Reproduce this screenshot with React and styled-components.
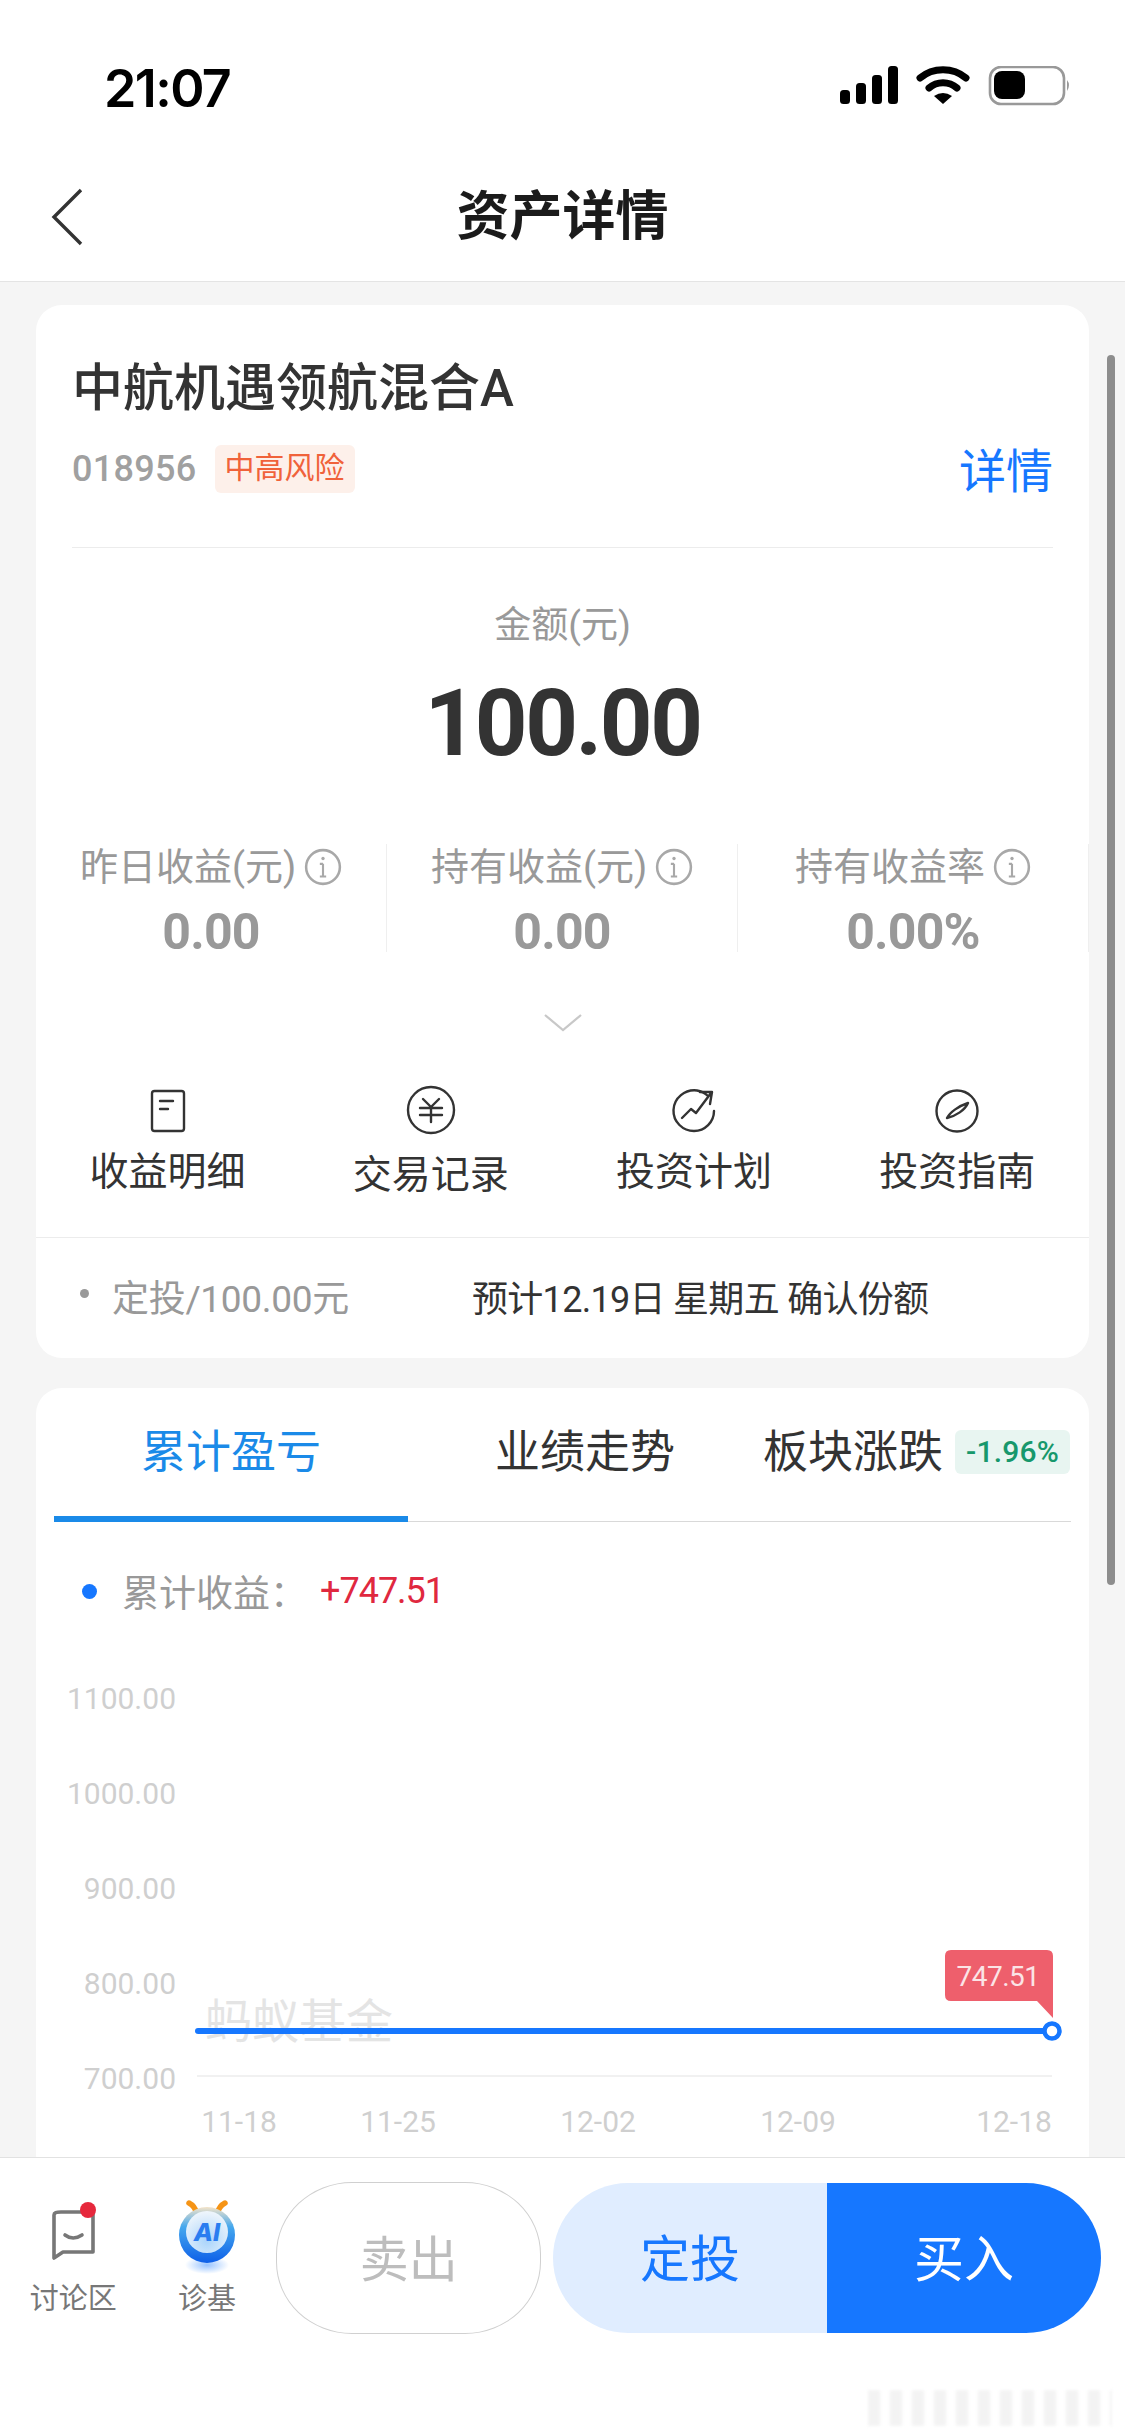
import React from 'react';
import styled, { createGlobalStyle } from 'styled-components';

const Global = createGlobalStyle`
  html, body { margin: 0; padding: 0; background: #fff; }
  * { box-sizing: border-box; }
  body { font-family: Roboto, "Noto Sans CJK SC", "Noto Sans", sans-serif; }
`;

const Page = styled.div`
  position: relative; width: 1125px; height: 2436px; overflow: hidden;
  display: flex; flex-direction: column; background: #fff;
`;
const StatusBar = styled.div`
  height: 178px; flex: none; padding: 59px 54px 0 104px;
  display: flex; justify-content: space-between; align-items: flex-start;
`;
const Clock = styled.div`
  font-family: Inter, sans-serif; font-size: 52px; line-height: 60px; font-weight: 600; color: #000; letter-spacing: -1.6px;
`;
const StatusIcons = styled.svg`width: 232px; height: 50px; margin-top: 7px;`;
const NavBar = styled.div`
  height: 104px; flex: none; position: relative; display: flex; align-items: center; justify-content: center;
  border-bottom: 1.5px solid #e4e4e4; padding-bottom: 26px;
`;
const BackIcon = styled.svg`position: absolute; left: 49px; top: 9px; width: 38px; height: 60px;`;
const NavTitle = styled.div`font-size: 53px; font-weight: 700; color: #1b1b1b; line-height: 60px;`;
const Scroller = styled.div`
  flex: 1; min-height: 0; overflow: hidden; background: #f5f5f5;
  padding: 23px 36px 0; display: flex; flex-direction: column; gap: 30px;
`;
const Card = styled.section`
  background: #fff; border-radius: 26px; flex: none;
`;
const Head = styled.div`
  margin: 0 36px; height: 243px; border-bottom: 1.5px solid #ececec; padding-top: 52px;
`;
const FundName = styled.div`font-size: 51px; font-weight: 500; line-height: 64px; color: #333;`;
const MetaRow = styled.div`display: flex; align-items: center; margin-top: 24px; height: 48px;`;
const Code = styled.span`font-size: 36px; font-weight: 500; color: #a0a0a0; letter-spacing: 0.3px;`;
const RiskTag = styled.span`
  margin-left: 18px; height: 48px; padding: 0 10px; background: #fdf0ea; border-radius: 6px;
  font-size: 30px; line-height: 46px; color: #f0623a;
`;
const DetailLink = styled.span`margin-left: auto; font-size: 47px; color: #1677ff; line-height: 52px; padding-top: 6px;`;
const Amount = styled.div`display: flex; flex-direction: column; align-items: center; padding-top: 55px;`;
const AmountLabel = styled.div`font-size: 37px; line-height: 46px; color: #999;`;
const AmountValue = styled.div`
  font-size: 92px; line-height: 110px; margin-top: 20px; font-weight: 700; color: #333; letter-spacing: -2.4px;
`;
const Stats = styled.div`display: grid; grid-template-columns: repeat(3, 351px); margin-top: 65px;`;
const Stat = styled.div`
  height: 108px; border-right: 1.5px solid #efefef; display: flex; flex-direction: column; align-items: center;
`;
const StatLabel = styled.div`
  display: flex; align-items: center; gap: 8px; font-size: 38px; line-height: 46px; color: #999;
`;
const StatValue = styled.div`
  font-size: 50px; line-height: 60px; margin-top: 12px; font-weight: 700; color: #999; letter-spacing: -0.8px;
`;
const InfoIcon = styled.svg`width: 38px; height: 38px; flex: none;`;
const Chevron = styled.svg`display: block; width: 40px; height: 20px; margin: 61px auto 0;`;
const Actions = styled.div`display: grid; grid-template-columns: repeat(4, 1fr); margin-top: 52px; height: 127px;`;
const Action = styled.div`
  display: flex; flex-direction: column; align-items: center; font-size: 39px; color: #333;
`;
const ActionIcon = styled.svg`width: 52px; height: 52px;`;
const ActionLabel = styled.div`line-height: 46px; margin-top: ${p => p.$low ? 15 : 12}px;`;
const PlanRow = styled.div`
  margin-top: 25px; height: 121px; border-top: 1.5px solid #ececec; display: flex; align-items: center; padding: 0 0 4px 44px;
  font-size: 36px;
`;
const PlanDot = styled.i`width: 9px; height: 9px; border-radius: 50%; background: #999; margin-right: 23px; margin-bottom: 6px;`;
const PlanType = styled.span`color: #999; width: 360px; font-size: 37px; letter-spacing: -0.3px;`;
const PlanNote = styled.span`color: #333; letter-spacing: -0.7px;`;
const Tabs = styled.div`
  margin: 0 18px; height: 134px; display: flex; border-bottom: 1.5px solid #d9d9d9; position: relative;
`;
const Tab = styled.div`
  width: ${p => p.$w}px; display: flex; align-items: flex-start; justify-content: center; padding-top: 36px; gap: 12px;
  font-size: 45px; line-height: 58px; color: ${p => p.$active ? '#1a8ae8' : '#333'};
  ${p => p.$active && 'border-bottom: 6px solid #1a8ae8; margin-bottom: -1px;'}
`;
const Badge = styled.span`
  height: 44px; padding: 0 11px; margin-top: 6px; background: #e8f5f1; border-radius: 6px;
  font-size: 30px; line-height: 44px; color: #17986c; font-weight: 500; letter-spacing: 0.2px;
`;
const Legend = styled.div`display: flex; align-items: center; padding: 40px 0 0 46px; height: 98px;`;
const LegendDot = styled.i`width: 15px; height: 15px; border-radius: 50%; background: #1677ff; margin-right: 25px;`;
const LegendLabel = styled.span`font-size: 37px; color: #999; width: 198px;`;
const LegendValue = styled.span`font-size: 36px; color: #e0283f; letter-spacing: -1px;`;
const Chart = styled.svg`display: block; width: 1053px; height: 560px;`;
const BottomBar = styled.div`
  height: 279px; flex: none; background: #fff; border-top: 1.5px solid #e2e2e2;
  display: flex; align-items: flex-start; padding: 24px 24px 0 0;
`;
const Tool = styled.div`
  width: ${p => p.$w}px; height: 152px; margin-left: ${p => p.$ml || 0}px;
  display: flex; flex-direction: column; align-items: center;
  font-size: 29px; color: #777;
`;
const ToolIcon = styled.svg`width: 80px; height: 80px; margin-top: ${p => p.$mt}px; flex: none;`;
const ToolLabel = styled.div`line-height: 36px; margin-top: ${p => p.$mt}px;`;
const SellButton = styled.div`
  width: 265px; height: 152px; margin-left: 7px; border: 1.5px solid #d0d0d0; border-radius: 76px / 72px; padding-bottom: 6px;
  display: flex; align-items: center; justify-content: center; font-size: 49px; color: #bdbdbd;
`;
const Split = styled.div`display: flex; margin-left: 12px; height: 150px; margin-top: 1px;`;
const SplitBtn = styled.div`
  width: 274px; display: flex; align-items: center; justify-content: center; font-size: 50px; padding-bottom: 6px;
  background: ${p => p.$primary ? '#1677ff' : '#e0edff'}; color: ${p => p.$primary ? '#fff' : '#1677ff'};
  border-radius: ${p => p.$primary ? '0 76px 76px 0' : '76px 0 0 76px'};
`;
const ScrollThumb = styled.div`
  position: absolute; left: 1107px; top: 355px; width: 8px; height: 1230px; border-radius: 4px; background: #8d8d8d;
`;
const Watermark = styled.div`
  position: absolute; left: 868px; top: 2390px; width: 244px; height: 36px; filter: blur(1.5px);
  background: repeating-linear-gradient(90deg, #ececec 0 12px, #fff 12px 22px);
  opacity: .6;
`;

const StatusSvg = () => (
  <StatusIcons viewBox="0 0 232 50">
    <rect x="1" y="24" width="10" height="14" rx="3.5" />
    <rect x="17" y="17" width="10" height="21" rx="3.5" />
    <rect x="33" y="9" width="10" height="29" rx="3.5" />
    <rect x="49" y="0" width="10" height="38" rx="3.5" />
    <path d="M81 12 C94 1 114 1 127 12" fill="none" stroke="#000" strokeWidth="7" strokeLinecap="round" />
    <path d="M90 22 C98 15 110 15 118 22" fill="none" stroke="#000" strokeWidth="7" strokeLinecap="round" />
    <path d="M95 30 Q104 24 113 30 L104 38 Z" />
    <rect x="151" y="1" width="74" height="37" rx="11" fill="none" stroke="#999" strokeWidth="2.6" />
    <rect x="155" y="5" width="31" height="28" rx="8" />
    <path d="M228 14 Q232 19 228 25 Z" fill="#999" />
  </StatusIcons>
);

const Info = () => (
  <InfoIcon viewBox="0 0 36 36" fill="none" stroke="#a8a8a8" strokeWidth="2.4">
    <circle cx="18" cy="18" r="16" />
    <path d="M18 15 V27 M15 15 H18 M15 27 H21" strokeWidth="2" />
    <circle cx="18" cy="10" r="1.6" fill="#a8a8a8" stroke="none" />
  </InfoIcon>
);

const stroke = { fill: 'none', stroke: '#333', strokeWidth: 2.4, strokeLinecap: 'round', strokeLinejoin: 'round' };

const actions = [
  { label: '收益明细', icon: <><rect x="10" y="6" width="32" height="40" rx="2.5" /><path d="M18 16 H31 M18 24 H26" /></> },
  { label: '交易记录', low: true, icon: <><circle cx="26" cy="25" r="23" /><path d="M18 14 L26 22 L34 14 M26 22 V37 M15 23 H37 M15 30 H37" /></> },
  { label: '投资计划', icon: <><path d="M40 11 A20.5 20.5 0 0 0 29 5.5 C17 4 6 13 5.5 25 C5 37 15 46 26 46 C37 46 46 37 46 26" /><path d="M14 33 L23 24 L28 28 L43 8 M32 7 H44 L42 19" /></> },
  { label: '投资指南', icon: <><circle cx="26" cy="26" r="20.5" /><path d="M16 33 C19 27 28 21 37 18 C34 25 25 31 16 33 Z" /></> },
];

const yTicks = [['1100.00', 1700], ['1000.00', 1795], ['900.00', 1890], ['800.00', 1985], ['700.00', 2080]];
const xTicks = [['11-18', 239], ['11-25', 398], ['12-02', 598], ['12-09', 798], ['12-18', 1014]];
const ORIGIN_X = 36;
const ORIGIN_Y = 1622;

const ChartSvg = () => (
  <Chart viewBox={`${ORIGIN_X} ${ORIGIN_Y} 1053 560`}>
    <g fontFamily="Roboto, sans-serif" fontSize="30" fill="#cfcfcf" fontWeight="400">
      {yTicks.map(([t, y]) => <text key={t} x="176" y={y + 11} textAnchor="end">{t}</text>)}
      {xTicks.map(([t, x]) => <text key={t} x={x} y="2134" textAnchor="middle">{t}</text>)}
    </g>
    <line x1="197" x2="1052" y1="2078" y2="2078" stroke="#ececec" strokeWidth="1.5" />
    <text x="205" y="2040" fontFamily='"Noto Sans CJK SC", sans-serif' fontSize="47" fill="#e4e4e4">蚂蚁基金</text>
    <line x1="198" x2="1046" y1="2033" y2="2033" stroke="#1677ff" strokeWidth="6" strokeLinecap="round" />
    <circle cx="1052" cy="2033" r="7.5" fill="#fff" stroke="#1677ff" strokeWidth="4.5" />
    <path d="M951 1952 H1047 Q1053 1952 1053 1958 V2020 L1037 2003 H951 Q945 2003 945 1997 V1958 Q945 1952 951 1952 Z" fill="#ee5f6c" />
    <text x="998" y="1988" textAnchor="middle" fontFamily="Roboto, sans-serif" fontSize="28" letterSpacing="-0.5" fill="#fbe4e6">747.51</text>
  </Chart>
);

const CommentIcon = () => (
  <ToolIcon $mt={14} viewBox="0 0 80 80">
    <path d="M26 12 H58 V52 H28 L19 58 V15 Q19 12 26 12 Z" transform="translate(2 4)" fill="none" stroke="#777" strokeWidth="3.6" strokeLinejoin="round" />
    <path d="M30 35 Q38 41 47 35" transform="translate(2 4)" fill="none" stroke="#777" strokeWidth="3.6" strokeLinecap="round" />
    <circle cx="55" cy="14" r="8" fill="#e6283c" />
  </ToolIcon>
);

const AiIcon = () => (
  <ToolIcon $mt={17} viewBox="0 0 80 80">
    <defs>
      <linearGradient id="aiRing" x1="0" y1="0" x2="0" y2="1">
        <stop offset="0" stopColor="#f4e3c8" />
        <stop offset=".35" stopColor="#45a8ee" />
        <stop offset="1" stopColor="#0e5fe8" />
      </linearGradient>
      <radialGradient id="aiCore" cx=".5" cy=".7" r=".7">
        <stop offset="0" stopColor="#a9d4fb" />
        <stop offset="1" stopColor="#f0f6fc" />
      </radialGradient>
      <radialGradient id="aiGlow" cx=".5" cy=".5" r=".5">
        <stop offset="0" stopColor="#7db4ff" stopOpacity=".8" />
        <stop offset="1" stopColor="#7db4ff" stopOpacity="0" />
      </radialGradient>
    </defs>
    <ellipse cx="40" cy="66" rx="22" ry="9" fill="url(#aiGlow)" />
    <path d="M22 4 Q28 7 30 15 M58 4 Q52 7 50 15" fill="none" stroke="#f59416" strokeWidth="5.5" strokeLinecap="round" />
    <circle cx="40" cy="36" r="28" fill="url(#aiRing)" />
    <circle cx="40" cy="33" r="21" fill="url(#aiCore)" />
    <text x="40" y="42" textAnchor="middle" fontFamily="Inter, sans-serif" fontWeight="800" fontStyle="italic" fontSize="25" fill="#2a7df0">AI</text>
  </ToolIcon>
);

export default function App() {
  return (
    <Page>
      <Global />
      <StatusBar>
        <Clock>21:07</Clock>
        <StatusSvg />
      </StatusBar>
      <NavBar>
        <BackIcon viewBox="0 0 38 60" fill="none" stroke="#333" strokeWidth="3.4">
          <path d="M32 5 L5 32 L32 59" transform="translate(0 -2)" />
        </BackIcon>
        <NavTitle>资产详情</NavTitle>
      </NavBar>
      <Scroller>
        <Card>
          <Head>
            <FundName>中航机遇领航混合A</FundName>
            <MetaRow>
              <Code>018956</Code>
              <RiskTag>中高风险</RiskTag>
              <DetailLink>详情</DetailLink>
            </MetaRow>
          </Head>
          <Amount>
            <AmountLabel>金额(元)</AmountLabel>
            <AmountValue>100.00</AmountValue>
          </Amount>
          <Stats>
            {[['昨日收益(元)', '0.00'], ['持有收益(元)', '0.00'], ['持有收益率', '0.00%']].map(([l, v]) => (
              <Stat key={l}>
                <StatLabel>{l}<Info /></StatLabel>
                <StatValue>{v}</StatValue>
              </Stat>
            ))}
          </Stats>
          <Chevron viewBox="0 0 40 20" fill="none" stroke="#c8c8c8" strokeWidth="2.2">
            <path d="M2 2 L20 17 L38 2" />
          </Chevron>
          <Actions>
            {actions.map(a => (
              <Action key={a.label}>
                <ActionIcon viewBox="0 0 52 52" {...stroke}>{a.icon}</ActionIcon>
                <ActionLabel $low={a.low}>{a.label}</ActionLabel>
              </Action>
            ))}
          </Actions>
          <PlanRow>
            <PlanDot />
            <PlanType>定投/100.00元</PlanType>
            <PlanNote>预计12.19日 星期五 确认份额</PlanNote>
          </PlanRow>
        </Card>
        <Card>
          <Tabs>
            <Tab $active $w={354}>累计盈亏</Tab>
            <Tab $w={354}>业绩走势</Tab>
            <Tab $w={309}>板块涨跌<Badge>-1.96%</Badge></Tab>
          </Tabs>
          <Legend>
            <LegendDot />
            <LegendLabel>累计收益：</LegendLabel>
            <LegendValue>+747.51</LegendValue>
          </Legend>
          <ChartSvg />
        </Card>
      </Scroller>
      <BottomBar>
        <Tool $w={147}><CommentIcon /><ToolLabel $mt={5}>讨论区</ToolLabel></Tool>
        <Tool $w={125} $ml={-2}><AiIcon /><ToolLabel $mt={2}>诊基</ToolLabel></Tool>
        <SellButton>卖出</SellButton>
        <Split>
          <SplitBtn>定投</SplitBtn>
          <SplitBtn $primary>买入</SplitBtn>
        </Split>
      </BottomBar>
      <ScrollThumb />
      <Watermark />
    </Page>
  );
}
